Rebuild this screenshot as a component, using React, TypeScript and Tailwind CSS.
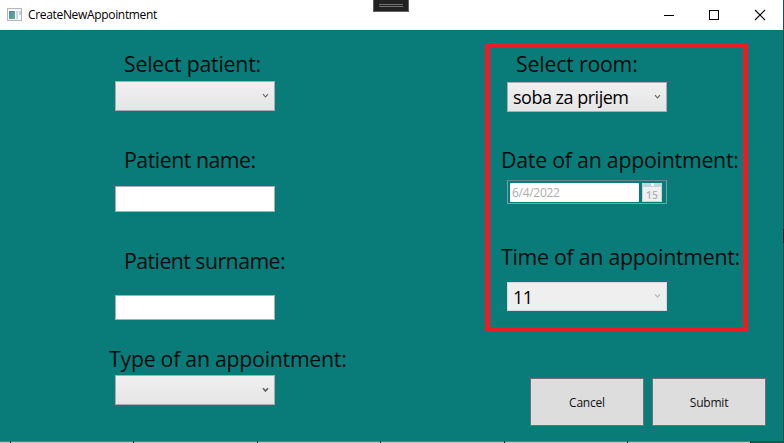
import React from 'react';

const Label = ({ children, className }: { children: React.ReactNode; className: string }) => (
  <div className={`h-[30px] whitespace-nowrap text-[21.3px] leading-[30px] text-[#020c0c] ${className}`}>{children}</div>
);

const Chevron = ({ color, width = 1.1 }: { color: string; width?: number }) => (
  <svg width="7" height="6" viewBox="0 0 7 6" className="mb-px shrink-0" fill="none">
    <path d="M1 1.2 L3.5 4 L6 1.2" stroke={color} strokeWidth={width} />
  </svg>
);

const Combo = ({ text = '', className = '', color = '#606060', width }: { text?: string; className?: string; color?: string; width?: number }) => (
  <div className={`flex w-[160px] items-center justify-between border pl-[5px] pr-[5px] ${className}`}>
    <span className="whitespace-nowrap text-[18px] leading-[28px] tracking-[-0.5px] text-black">{text}</span>
    <Chevron color={color} width={width} />
  </div>
);

const enabled = 'h-[30px] border-[#acacac] bg-linear-to-b from-[#f0f0f0] to-[#e5e5e5]';

const Button = ({ children }: { children: React.ReactNode }) => (
  <button className="h-[48px] w-[114px] border border-[#707070] bg-[#dddddd] pt-[2px] text-[12px] tracking-[-0.2px] text-[#111]">{children}</button>
);

export default function App() {
  return (
    <div className="flex h-[443px] w-[784px] overflow-hidden bg-[#097c7a] font-['Open_Sans','Noto_Sans',sans-serif]">
      <div className="flex w-[783px] flex-col">
        <header className="relative flex h-[30px] shrink-0 items-center bg-white">
          <svg className="ml-[7px]" width="16" height="14" viewBox="0 0 16 14">
            <defs>
              <linearGradient id="pane" x1="0" y1="0" x2="1" y2="1">
                <stop offset="0" stopColor="#4c84b4" />
                <stop offset="1" stopColor="#68b08a" />
              </linearGradient>
            </defs>
            <rect x="0.5" y="0.5" width="14" height="12" fill="#f5f6f8" stroke="#b2b6bb" />
            <rect x="2" y="3" width="6" height="8" fill="url(#pane)" />
            <rect x="9" y="3" width="2" height="8" fill="#cbd9e2" />
            <rect x="12" y="3" width="2" height="4" fill="#c6d2cf" />
          </svg>
          <span className="ml-[5px] text-[12px] tracking-[-0.33px] text-black">CreateNewAppointment</span>
          <div className="absolute left-[373px] top-0 flex h-[12px] w-[36px] flex-col items-center border border-t-0 border-[#626262] bg-[#222] pt-[4px]">
            <div className="h-[3px] w-[24px] border-y border-[#707070]" />
          </div>
          <svg className="ml-auto mr-[17px]" width="103" height="12" viewBox="0 0 103 12" fill="none" stroke="#000">
            <path d="M1 6.5H11" />
            <rect x="46.5" y="1.5" width="9" height="9" />
            <path d="M92 1 L102 11 M102 1 L92 11" strokeWidth="1.1" />
          </svg>
        </header>

        <main className="flex h-[411px] shrink-0">
          <section className="ml-[109px] flex w-[376px] flex-col pt-[19px]">
            <Label className="ml-[15px] tracking-[-0.23px]">Select patient:</Label>
            <Combo className={`ml-[6px] mt-[2px] ${enabled}`} />
            <Label className="ml-[15px] mt-[34px] tracking-[-0.48px]">Patient name:</Label>
            <input aria-label="Patient name" className="ml-[6px] mt-[11px] h-[26px] w-[160px] border border-[#abadb3] bg-white" />
            <Label className="ml-[15px] mt-[34px] tracking-[-0.55px]">Patient surname:</Label>
            <input aria-label="Patient surname" className="ml-[6px] mt-[19px] h-[25px] w-[160px] border border-[#abadb3] bg-white" />
            <Label className="mt-[24px] tracking-[-0.26px]">Type of an appointment:</Label>
            <Combo className={`ml-[6px] mt-px ${enabled}`} width={1.7} />
          </section>

          <section className="flex flex-col pt-[13px]">
            <div className="flex h-[289px] w-[263px] flex-col border-[5px] border-[#ed1c24] pl-[11px] pt-px">
              <Label className="ml-[15px] tracking-[-0.2px]">Select room:</Label>
              <Combo text="soba za prijem" className={`ml-[6px] mt-[3px] ${enabled}`} />
              <Label className="mt-[33px] tracking-[-0.23px]">Date of an appointment:</Label>
              <div className="ml-[6px] mt-[5px] flex h-[24px] w-[160px] items-center border border-[#6da6a9] border-t-[#68868b] pl-[2px]">
                <div className="h-[19px] w-[129px] rounded-[1px] bg-white pl-[2px] text-[12px] leading-[19px] tracking-[-0.3px] text-[#adadad]">6/4/2022</div>
                <div className="ml-[3px] flex h-[19px] w-[20px] flex-col border border-t-0 border-[#cbd3d5] bg-[#eff1f1]">
                  <div className="flex h-[4px] shrink-0 items-center justify-center bg-[#c0d5e3]">
                    <div className="size-[3px] rounded-full bg-white" />
                  </div>
                  <svg className="h-[14px] w-[18px]" viewBox="0 0 18 14">
                    <text x="9" y="11.5" textAnchor="middle" textLength="12" lengthAdjust="spacingAndGlyphs" fontSize="10" fontWeight="600" fill="#b3b3b3">15</text>
                  </svg>
                </div>
              </div>
              <Label className="mt-[38px] tracking-[-0.26px]">Time of an appointment:</Label>
              <Combo text="11" className="ml-[6px] mt-[10px] h-[29px] border-[#d9d9d9] bg-[#efefef]" color="#bfbfbf" width={1.3} />
            </div>
            <div className="ml-[45px] mt-[46px] flex gap-2">
              <Button>Cancel</Button>
              <Button>Submit</Button>
            </div>
          </section>
        </main>

        <footer className="flex h-[2px] shrink-0 bg-[#185653]">
          <div className="h-[2px] w-[11px] border-r border-t border-r-black border-t-[#777] bg-[#c4c4c4]" />
          {[123, 124, 123, 124, 123, 123].map((w, i) => (
            <div key={i} style={{ width: w }} className="h-[2px] border-r border-t border-r-black border-t-[#777] bg-[#c4c4c4]" />
          ))}
        </footer>
      </div>
      <div className="flex w-px flex-col bg-[#20514e] pt-[229px]">
        <div className="h-[14px] bg-[#061819]" />
      </div>
    </div>
  );
}
